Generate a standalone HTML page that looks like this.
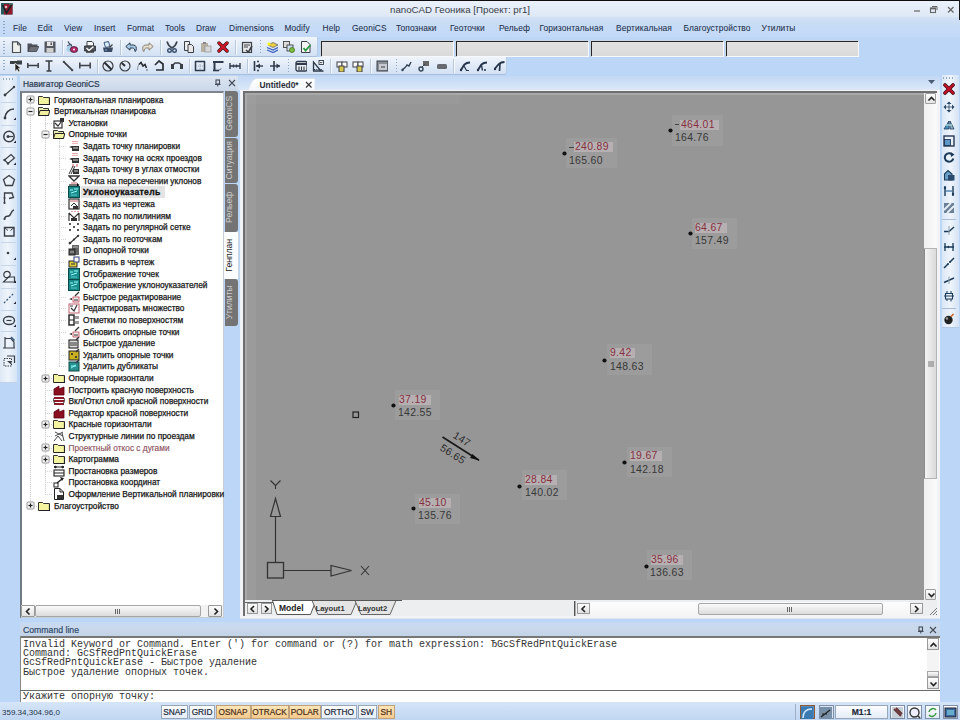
<!DOCTYPE html>
<html><head><meta charset="utf-8"><style>
*{margin:0;padding:0;box-sizing:border-box}
html,body{width:960px;height:720px;overflow:hidden;background:#bcd6f7;font-family:"Liberation Sans",sans-serif;position:relative}
.a{position:absolute}
.t{position:absolute;white-space:nowrap;line-height:1}
.mi{top:24px;font-size:8.4px;color:#1b2d48;-webkit-text-stroke:.05px #1b2d48;letter-spacing:.1px}
.r{font-size:8.3px;color:#161616;-webkit-text-stroke:.25px #161616}
.lbl{font-size:11.6px;letter-spacing:.35px;transform:scaleX(.9);transform-origin:0 0}
.red{color:#86303f}
.blk{color:#383838}
.ml{font-family:"Liberation Mono",monospace;font-size:10px;color:#333;left:23px}
.sb{position:absolute;top:705px;height:14px;font-size:8.3px;color:#1e2a3a;-webkit-text-stroke:.2px #1e2a3a;text-align:center;line-height:13px;border:1px solid #98a6ba;background:linear-gradient(#fcfdff,#e4ecf6);}
.sb.o{background:linear-gradient(#fde6b8,#f5c98c);border-color:#c0a078;color:#4a2e14;-webkit-text-stroke:.2px #4a2e14}
.tabv{position:absolute;left:225px;width:13px;background:#747474;border-radius:0 3px 3px 0}
.tabt{position:absolute;font-size:8.3px;color:#e8e8e8;white-space:nowrap;line-height:1;transform:rotate(-90deg);transform-origin:0 0}
</style></head><body>
<div class="a" style="left:0px;top:0px;width:960px;height:1px;background:#0e0e10"></div>
<div class="a" style="left:0px;top:1px;width:960px;height:16px;background:linear-gradient(#eaf1fa,#dee8f5)"></div>
<svg class="a" style="left:1.3px;top:3px" width="12" height="12" viewBox="0 0 12 12"><rect x="0" y="0" width="11.5" height="11.5" fill="#2a5a5e"/><rect x="3" y="1" width="8.5" height="10.5" fill="#8e1c2c"/><path d="M1.5 2L5.5 10L11 1" stroke="#1a2228" stroke-width="1.6" fill="none"/><circle cx="5" cy="4" r="1.3" fill="#e8b0b8"/><rect x="8" y="0" width="3.5" height="2" fill="#4a6a60"/></svg>
<div class="t" style="left:390px;top:4.5px;font-size:9.7px;color:#3a3f47">nanoCAD Геоника [Проект: pr1]</div>
<svg class="a" style="left:912px;top:5px" width="9" height="9" viewBox="0 0 9 9"><path d="M2 6H8" stroke="#666" stroke-width="1.2"/></svg>
<svg class="a" style="left:929px;top:5px" width="9" height="9" viewBox="0 0 9 9"><path d="M3 1.5H8V5" stroke="#666" stroke-width="1" fill="none"/><rect x="1.5" y="3" width="5" height="4.5" fill="none" stroke="#666" stroke-width="1.1"/><path d="M1.5 3.6H6.5" stroke="#666" stroke-width="1.5"/></svg>
<svg class="a" style="left:946px;top:5px" width="9" height="9" viewBox="0 0 9 9"><path d="M2 2L7.5 7.5M7.5 2L2 7.5" stroke="#666" stroke-width="1.2"/></svg>
<div class="a" style="left:0px;top:17px;width:960px;height:20px;background:linear-gradient(#d3e1f3 0,#c8dcf6 35%,#c2d9f7 100%)"></div>
<div class="a" style="left:3px;top:21px;width:2px;height:13px;background:repeating-linear-gradient(#8da6c4 0 1px,transparent 1px 3px)"></div>
<div class="t mi" style="left:13px">File</div>
<div class="t mi" style="left:37.5px">Edit</div>
<div class="t mi" style="left:64px">View</div>
<div class="t mi" style="left:94px">Insert</div>
<div class="t mi" style="left:127px">Format</div>
<div class="t mi" style="left:165px">Tools</div>
<div class="t mi" style="left:196px">Draw</div>
<div class="t mi" style="left:229px">Dimensions</div>
<div class="t mi" style="left:284.5px">Modify</div>
<div class="t mi" style="left:322.5px">Help</div>
<div class="t mi" style="left:352px">GeoniCS</div>
<div class="t mi" style="left:396px">Топознаки</div>
<div class="t mi" style="left:450px">Геоточки</div>
<div class="t mi" style="left:499px">Рельеф</div>
<div class="t mi" style="left:539.5px">Горизонтальная</div>
<div class="t mi" style="left:616px">Вертикальная</div>
<div class="t mi" style="left:683.5px">Благоустройство</div>
<div class="t mi" style="left:761.5px">Утилиты</div>
<div class="a" style="left:959px;top:0px;width:1px;height:20px;background:#1a1a1c"></div>
<div class="a" style="left:0px;top:37px;width:318px;height:20px;background:linear-gradient(#f0f5fc 0,#e2ebf7 45%,#d2e1f4 100%);border-bottom:1px solid #a9c0dc;border-right:1px solid #b8cde6;border-radius:0 0 3px 0"></div>
<div class="a" style="left:0px;top:57px;width:507px;height:18px;background:linear-gradient(#f0f5fc 0,#e2ebf7 45%,#d2e1f4 100%);border-bottom:1px solid #a9c0dc;border-right:1px solid #b8cde6;border-radius:0 0 3px 0"></div>
<div class="a" style="left:3px;top:41px;width:2px;height:13px;background:repeating-linear-gradient(#94aac6 0 1px,transparent 1px 3px)"></div>
<div class="a" style="left:3px;top:60px;width:2px;height:12px;background:repeating-linear-gradient(#94aac6 0 1px,transparent 1px 3px)"></div>
<svg class="a" style="left:10px;top:41px" width="12" height="12" viewBox="0 0 12 12"><path d="M2.5 .8H7.5L10.5 3.8V11.5H2.5Z" fill="#eef0ec" stroke="#4a4e54" stroke-width="1.2"/><path d="M7.5 .8V3.8H10.5" fill="none" stroke="#4a4e54" stroke-width="1"/></svg>
<svg class="a" style="left:27px;top:41px" width="12" height="12" viewBox="0 0 12 12"><path d="M.5 2.5H4.5L5.5 3.5H10.5V5.5H3.5L1.5 10.5H.5Z" fill="#50545a"/><path d="M3 5.5H11.8L9.5 10.5H1Z" fill="#6e7278" stroke="#3b3f46" stroke-width=".8"/></svg>
<svg class="a" style="left:44px;top:41px" width="12" height="12" viewBox="0 0 12 12"><rect x=".5" y=".5" width="11" height="11" fill="#555a60"/><rect x="3" y="1" width="6" height="4" fill="#e6e6e6"/><rect x="6.5" y="1.5" width="1.5" height="2.5" fill="#555"/><rect x="2.5" y="7" width="7" height="4.5" fill="#cfcfcf"/></svg>
<svg class="a" style="left:66px;top:41px" width="12" height="12" viewBox="0 0 12 12"><path d="M2 .5L4.5 4.5" stroke="#3a4a60" stroke-width="1.3"/><path d="M1 5L5 3L6 6" stroke="#3a4a60" stroke-width="1" fill="none"/><circle cx="3.5" cy="8" r="3" fill="#a8d0e8"/><ellipse cx="8" cy="8.5" rx="3.8" ry="3" fill="#b02868" stroke="#3a1a30" stroke-width=".7"/><circle cx="8" cy="8.5" r=".9" fill="#fff"/></svg>
<svg class="a" style="left:84px;top:41px" width="12" height="12" viewBox="0 0 12 12"><path d="M3 .5H8L9.5 2V5H3Z" fill="#fff" stroke="#3b3f46" stroke-width="1"/><path d="M.5 5H11.5V10H.5Z" fill="#50545a" stroke="#2a2e34" stroke-width=".8"/><path d="M2.5 7L5 9.5L9.5 5.5" stroke="#f4f4f4" stroke-width="1.4" fill="none"/><rect x="2" y="10" width="8" height="1.8" fill="#444"/></svg>
<svg class="a" style="left:102px;top:41px" width="12" height="12" viewBox="0 0 12 12"><path d="M2 1.5L6.5 .5L8 5.5L3.5 6.5Z" fill="#d8ecf8" stroke="#2a4a70" stroke-width=".9"/><path d="M1 6.5H11L10 11H2Z" fill="#3a4a62"/><path d="M7.5 6.5L10.5 3.5" stroke="#444" stroke-width="1.3"/><circle cx="4" cy="9" r="1" fill="#6a8ab0"/></svg>
<svg class="a" style="left:125px;top:41px" width="12" height="12" viewBox="0 0 12 12"><path d="M.8 5.5L5 1.8V4H8.5C11 4 11.8 6.5 11 9.8L10 10.5C9.8 8.2 9 7 7.5 7H5V9.2Z" fill="#a6cce8" stroke="#2c3a4a" stroke-width="1"/></svg>
<svg class="a" style="left:142px;top:41px" width="12" height="12" viewBox="0 0 12 12"><path d="M11.2 5.5L7 1.8V4H3.5C1 4 .2 6.5 1 9.8L2 10.5C2.2 8.2 3 7 4.5 7H7V9.2Z" fill="#e4dccc" stroke="#8a8478" stroke-width="1"/></svg>
<svg class="a" style="left:166px;top:41px" width="12" height="12" viewBox="0 0 12 12"><path d="M1 .5C2 4 4 6 6 7C8 6 10 4 11 .5" stroke="#3a4450" stroke-width="1.6" fill="none"/><circle cx="3.5" cy="9.5" r="1.8" fill="none" stroke="#3a5070" stroke-width="1.4"/><circle cx="8.5" cy="9.5" r="1.8" fill="none" stroke="#3a5070" stroke-width="1.4"/></svg>
<svg class="a" style="left:183px;top:41px" width="12" height="12" viewBox="0 0 12 12"><path d="M1.5 .5H6.5V9.5H1.5Z" fill="#eee" stroke="#3b3f46"/><path d="M5 3.5H8.5L10.5 5.5V11.5H5Z" fill="#e8e8e8" stroke="#3b3f46"/></svg>
<svg class="a" style="left:200px;top:41px" width="12" height="12" viewBox="0 0 12 12"><rect x="1" y="2" width="7" height="9" fill="#b8b0a0"/><rect x="3" y="1" width="3" height="2" fill="#888"/><rect x="5" y="5" width="6" height="6" fill="#d8d8d8" stroke="#999" stroke-width=".8"/></svg>
<svg class="a" style="left:217px;top:41px" width="12" height="12" viewBox="0 0 12 12"><path d="M2 2L10 10M10 2L2 10" stroke="#3a0a10" stroke-width="3.4" stroke-linecap="round"/><path d="M2 2L10 10M10 2L2 10" stroke="#d01828" stroke-width="2.3" stroke-linecap="round"/></svg>
<svg class="a" style="left:241px;top:41px" width="12" height="12" viewBox="0 0 12 12"><rect x="1.5" y="1.5" width="9" height="10" fill="#e8e8e8" stroke="#3b3f46" stroke-width="1.2"/><path d="M3 4H9M3 6H7" stroke="#3b3f46"/><path d="M5 9L7.5 11L11 5" stroke="#3b3f46" stroke-width="1.6" fill="none"/></svg>
<svg class="a" style="left:266px;top:41px" width="12" height="12" viewBox="0 0 12 12"><path d="M2 4L7 1.5L12 4L7 6.5Z" fill="#f0d040" stroke="#556" stroke-width=".7"/><path d="M1 6.5L7 9L12 6.5M1 9L7 11.5L12 9" stroke="#3a60c0" stroke-width="1.3" fill="none"/><circle cx="3" cy="3" r="1.5" fill="#ff0"/></svg>
<svg class="a" style="left:283px;top:41px" width="12" height="12" viewBox="0 0 12 12"><rect x=".5" y=".5" width="6" height="6" fill="#ddd" stroke="#444" stroke-width=".9"/><rect x="4" y="4" width="6" height="6" fill="#cde" stroke="#444" stroke-width=".9"/><circle cx="9" cy="9" r="2.5" fill="#7ac040" stroke="#4a7020" stroke-width=".8"/></svg>
<svg class="a" style="left:300px;top:41px" width="12" height="12" viewBox="0 0 12 12"><path d="M1.5 .5H7L10 3.5V11.5H1.5Z" fill="#f4f4f4" stroke="#3b3f46"/><path d="M3.5 7L5.5 9.5L10.5 4" stroke="#2a9a40" stroke-width="1.8" fill="none"/></svg>
<div class="a" style="left:62px;top:40px;width:2px;height:15px;border-left:1px solid #b9c9dc;border-right:1px solid #f6f9fd"></div>
<div class="a" style="left:120px;top:40px;width:2px;height:15px;border-left:1px solid #b9c9dc;border-right:1px solid #f6f9fd"></div>
<div class="a" style="left:160px;top:40px;width:2px;height:15px;border-left:1px solid #b9c9dc;border-right:1px solid #f6f9fd"></div>
<div class="a" style="left:235px;top:40px;width:2px;height:15px;border-left:1px solid #b9c9dc;border-right:1px solid #f6f9fd"></div>
<div class="a" style="left:260px;top:40px;width:1px;height:15px;background:repeating-linear-gradient(#8fa4be 0 1px,transparent 1px 3px)"></div>
<svg class="a" style="left:9.5px;top:60px" width="12" height="12" viewBox="0 0 12 12"><path d="M0 1H7V4H0Z" fill="#3b3f46"/><path d="M7 .5H12V4.5H7Z" fill="#3b3f46"/><path d="M5 3L5 11.5L7 9.5L8.5 12L10 11L8.5 8.5H11Z" fill="#222" stroke="#fff" stroke-width=".6"/></svg>
<svg class="a" style="left:27px;top:60px" width="12" height="12" viewBox="0 0 12 12"><path d="M.8 3V8M11.2 3V8M.8 5.5H11.2" stroke="#3b3f46" stroke-width="1.5"/></svg>
<svg class="a" style="left:43px;top:60px" width="12" height="12" viewBox="0 0 12 12"><path d="M2.5 1H9.5M3.5 11H8.5M6 1V11" stroke="#3b3f46" stroke-width="1.6"/></svg>
<svg class="a" style="left:61.5px;top:60px" width="12" height="12" viewBox="0 0 12 12"><path d="M1 2.5L2.5 1M9.5 11L11 9.5M1.8 1.8L10.2 10.2" stroke="#3b3f46" stroke-width="1.7"/></svg>
<svg class="a" style="left:78.5px;top:60px" width="12" height="12" viewBox="0 0 12 12"><path d="M.8 2.5V8.5M11.2 2.5V8.5M.8 5.5H11.2" stroke="#3b3f46" stroke-width="1.5"/></svg>
<svg class="a" style="left:102px;top:60px" width="12" height="12" viewBox="0 0 12 12"><circle cx="6" cy="6" r="5" fill="none" stroke="#3b3f46" stroke-width="1.2"/><path d="M2.5 2.5L9.5 9.5" stroke="#2a2e35" stroke-width="1.9"/></svg>
<svg class="a" style="left:119px;top:60px" width="12" height="12" viewBox="0 0 12 12"><circle cx="6" cy="6" r="5" fill="none" stroke="#3b3f46" stroke-width="1.2"/><path d="M6 6L2.8 3" stroke="#2a2e35" stroke-width="2"/></svg>
<svg class="a" style="left:136px;top:60px" width="12" height="12" viewBox="0 0 12 12"><path d="M1.5 10C1.5 6 3 3 6 2" fill="none" stroke="#8a9098" stroke-width="1"/><path d="M3 4.5L5 2.5L7 6L9 4.5L10.5 8" stroke="#2a2e35" stroke-width="1.6" fill="none"/><circle cx="11" cy="10" r=".8" fill="#555"/></svg>
<svg class="a" style="left:154px;top:60px" width="12" height="12" viewBox="0 0 12 12"><path d="M1 5L5 1L9 4V10H2" fill="none" stroke="#2a2e35" stroke-width="1.7"/></svg>
<svg class="a" style="left:171px;top:60px" width="12" height="12" viewBox="0 0 12 12"><path d="M1 6L4 3L8 3L11 5" fill="none" stroke="#3b3f46" stroke-width="1.5"/><path d="M0 4H3V9H0ZM9 4H12V9H9Z" fill="#3b3f46"/></svg>
<svg class="a" style="left:194px;top:60px" width="12" height="12" viewBox="0 0 12 12"><path d="M1 1.5H11M1 10.5H11M1.5 1V11M10.5 1V11" stroke="#2f3a4a" stroke-width="1.5"/><path d="M2 6H10M6 2V10" stroke="#8a96a6" stroke-width=".8" stroke-dasharray="1 1"/></svg>
<svg class="a" style="left:212px;top:60px" width="12" height="12" viewBox="0 0 12 12"><path d="M1 2H11.5" stroke="#2f3a4a" stroke-width="2"/><path d="M2.5 2V10" stroke="#2f3a4a" stroke-width="2"/><path d="M1 10.5H7" stroke="#2f3a4a" stroke-width="1.6"/><path d="M7 10.5L9 8.5" stroke="#2f3a4a" stroke-width="1"/></svg>
<svg class="a" style="left:228.5px;top:60px" width="12" height="12" viewBox="0 0 12 12"><path d="M1 3V9M11 3V9M1 6H11M4.5 4.5V7.5M7.5 4.5V7.5" stroke="#2f3a4a" stroke-width="1.4"/></svg>
<svg class="a" style="left:251.5px;top:60px" width="12" height="12" viewBox="0 0 12 12"><path d="M2.5 1V11" stroke="#2f3a4a" stroke-width="1.6"/><path d="M4 6H11" stroke="#2f3a4a" stroke-width="1.4"/><path d="M4 6L8 3.5V8.5Z" fill="#2f3a4a"/><circle cx="6" cy="1.5" r="1" fill="#2f3a4a"/><circle cx="6" cy="10.5" r="1" fill="#2f3a4a"/></svg>
<svg class="a" style="left:269px;top:60px" width="12" height="12" viewBox="0 0 12 12"><path d="M5 1V11" stroke="#2f3a4a" stroke-width="1.6"/><path d="M1 6H11" stroke="#2f3a4a" stroke-width="1.4"/><path d="M11 6L7.5 3.5V8.5Z" fill="#2f3a4a"/></svg>
<svg class="a" style="left:295px;top:60px" width="12" height="12" viewBox="0 0 12 12"><rect x="1" y="1.5" width="11" height="9.5" rx="1.5" fill="#e8edf3" stroke="#2f3a4a" stroke-width="1.3"/><path d="M1 4H12" stroke="#2f3a4a" stroke-width="2"/><path d="M4 6.5V10M6.5 6.5V10M9 6.5V10" stroke="#2f3a4a" stroke-width="1.1"/></svg>
<svg class="a" style="left:312px;top:60px" width="12" height="12" viewBox="0 0 12 12"><path d="M1 11H11.5M1.5 11V2L9 11" fill="none" stroke="#2f3a4a" stroke-width="1.3"/><path d="M2 9.5H10" stroke="#2f3a4a" stroke-dasharray="1 .8"/><rect x="7" y=".5" width="4.5" height="4" fill="#fff" stroke="#2f3a4a" stroke-width=".9"/><path d="M8 1.8L9.2 3.2L10.5 1.8" stroke="#2f3a4a" fill="none"/></svg>
<svg class="a" style="left:336px;top:60px" width="12" height="12" viewBox="0 0 12 12"><rect x="1" y="2" width="5" height="5" fill="#fff" stroke="#3b3f46"/><rect x="6" y="2" width="5" height="5" fill="#fff" stroke="#3b3f46"/><rect x="3" y="6" width="5" height="6" fill="#d8c850" stroke="#3b3f46"/></svg>
<svg class="a" style="left:352px;top:60px" width="12" height="12" viewBox="0 0 12 12"><rect x="1" y="2" width="5" height="5" fill="#fff" stroke="#3b3f46"/><rect x="6" y="2" width="5" height="5" fill="#fff" stroke="#3b3f46"/><rect x="5" y="6" width="5" height="6" fill="#d8c850" stroke="#3b3f46"/></svg>
<svg class="a" style="left:376px;top:60px" width="12" height="12" viewBox="0 0 12 12"><rect x="1" y="1" width="11" height="10" fill="#8a9098" stroke="#3b3f46"/><rect x="3" y="4" width="8" height="6" fill="#c8ccd2"/><path d="M5 7H9" stroke="#3b3f46"/></svg>
<svg class="a" style="left:401px;top:60px" width="12" height="12" viewBox="0 0 12 12"><path d="M1 10C3 9 5 7 6 5L8 6L10 2" stroke="#345" stroke-width="1.4" fill="none"/><circle cx="1.5" cy="10" r="1.2" fill="#345"/></svg>
<svg class="a" style="left:418px;top:60px" width="12" height="12" viewBox="0 0 12 12"><circle cx="3" cy="9" r="2" fill="none" stroke="#345" stroke-width="1.4"/><rect x="5" y="1" width="6" height="5" fill="#666"/><path d="M4 7L7 4" stroke="#345"/></svg>
<svg class="a" style="left:436px;top:60px" width="12" height="12" viewBox="0 0 12 12"><rect x="1" y="4" width="10" height="5" rx="1.5" fill="#666a70"/></svg>
<svg class="a" style="left:459px;top:60px" width="12" height="12" viewBox="0 0 12 12"><path d="M1.5 10.5C3 9 4 6 5.5 4.5C7 3 9 2.5 11 2.5" stroke="#26344a" stroke-width="1.8" fill="none"/><path d="M5 6L7.5 10.5H10" stroke="#26344a" stroke-width="1.2" fill="none"/><circle cx="2" cy="10" r="1.2" fill="#26344a"/></svg>
<svg class="a" style="left:476px;top:60px" width="12" height="12" viewBox="0 0 12 12"><path d="M1.5 10.5C3 9 4 6 5.5 4.5C7 3 9 2.5 11 2.5" stroke="#26344a" stroke-width="1.8" fill="none"/><path d="M5.5 5.5L6.5 10.5" stroke="#26344a" stroke-width="1.3" fill="none"/><circle cx="9" cy="10" r="1" fill="#26344a"/><circle cx="2" cy="10" r="1.2" fill="#26344a"/></svg>
<svg class="a" style="left:493px;top:60px" width="12" height="12" viewBox="0 0 12 12"><path d="M1.5 9C3 8 4 5.5 6 4C7.5 2.5 9.5 2 11.5 2" stroke="#26344a" stroke-width="1.8" fill="none"/><path d="M7 3.5L6.5 11" stroke="#26344a" stroke-width="1.6" fill="none"/><circle cx="2" cy="9" r="1.2" fill="#26344a"/></svg>
<div class="a" style="left:97px;top:59px;width:2px;height:14px;border-left:1px solid #b9c9dc;border-right:1px solid #f6f9fd"></div>
<div class="a" style="left:189px;top:59px;width:2px;height:14px;border-left:1px solid #b9c9dc;border-right:1px solid #f6f9fd"></div>
<div class="a" style="left:246.5px;top:59px;width:2px;height:14px;border-left:1px solid #b9c9dc;border-right:1px solid #f6f9fd"></div>
<div class="a" style="left:288px;top:59px;width:1px;height:14px;background:repeating-linear-gradient(#8fa4be 0 1px,transparent 1px 3px)"></div>
<div class="a" style="left:329.5px;top:59px;width:2px;height:14px;border-left:1px solid #b9c9dc;border-right:1px solid #f6f9fd"></div>
<div class="a" style="left:370px;top:59px;width:2px;height:14px;border-left:1px solid #b9c9dc;border-right:1px solid #f6f9fd"></div>
<div class="a" style="left:396px;top:59px;width:1px;height:14px;background:repeating-linear-gradient(#8fa4be 0 1px,transparent 1px 3px)"></div>
<div class="a" style="left:453px;top:59px;width:2px;height:14px;border-left:1px solid #b9c9dc;border-right:1px solid #f6f9fd"></div>
<div class="a" style="left:321px;top:41px;width:132px;height:15px;background:linear-gradient(#e2e2e2,#dadada);border-top:1.5px solid #262626;border-left:1.5px solid #262626;box-shadow:1px 1px 0 #f6f8fb, 0 0 0 1px #c9d6e6"></div>
<div class="a" style="left:456px;top:41px;width:132px;height:15px;background:linear-gradient(#e2e2e2,#dadada);border-top:1.5px solid #262626;border-left:1.5px solid #262626;box-shadow:1px 1px 0 #f6f8fb, 0 0 0 1px #c9d6e6"></div>
<div class="a" style="left:591px;top:41px;width:132px;height:15px;background:linear-gradient(#e2e2e2,#dadada);border-top:1.5px solid #262626;border-left:1.5px solid #262626;box-shadow:1px 1px 0 #f6f8fb, 0 0 0 1px #c9d6e6"></div>
<div class="a" style="left:726px;top:41px;width:132px;height:15px;background:linear-gradient(#e2e2e2,#dadada);border-top:1.5px solid #262626;border-left:1.5px solid #262626;box-shadow:1px 1px 0 #f6f8fb, 0 0 0 1px #c9d6e6"></div>
<div class="a" style="left:0px;top:76px;width:17px;height:307px;background:linear-gradient(90deg,#dde8f6,#eef4fb 45%,#d6e4f5);border-bottom:1px solid #c0d2e8"></div>
<div class="a" style="left:3px;top:78px;width:11px;height:2px;background:repeating-linear-gradient(90deg,#94aac6 0 1px,transparent 1px 3px)"></div>
<div class="a" style="left:1px;top:102px;width:15px;height:1px;background:#c6d5e8"></div>
<div class="a" style="left:1px;top:125px;width:15px;height:1px;background:#c6d5e8"></div>
<div class="a" style="left:1px;top:147px;width:15px;height:1px;background:#c6d5e8"></div>
<div class="a" style="left:1px;top:169px;width:15px;height:1px;background:#c6d5e8"></div>
<div class="a" style="left:1px;top:242px;width:15px;height:1px;background:#c6d5e8"></div>
<div class="a" style="left:1px;top:265px;width:15px;height:1px;background:#c6d5e8"></div>
<div class="a" style="left:1px;top:288px;width:15px;height:1px;background:#c6d5e8"></div>
<div class="a" style="left:1px;top:310px;width:15px;height:1px;background:#c6d5e8"></div>
<div class="a" style="left:1px;top:331px;width:15px;height:1px;background:#c6d5e8"></div>
<svg class="a" style="left:2px;top:84.5px" width="15" height="14" viewBox="0 0 15 14"><path d="M3 10L12 2" stroke="#3b3f46" stroke-width="1.2"/><circle cx="3" cy="10" r="1.4" fill="#3b3f46"/><circle cx="12" cy="2" r="1.2" fill="#3b3f46"/></svg>
<svg class="a" style="left:2px;top:106.5px" width="15" height="14" viewBox="0 0 15 14"><path d="M3 11C3 6 7 2 12 2" fill="none" stroke="#3b3f46" stroke-width="1.6"/><circle cx="3" cy="11" r="1.4" fill="#3b3f46"/><path d="M11.5 13L14 10.5V13Z" fill="#223"/></svg>
<svg class="a" style="left:2px;top:129.5px" width="15" height="14" viewBox="0 0 15 14"><circle cx="7" cy="6.5" r="5.2" fill="none" stroke="#3b3f46" stroke-width="1.5"/><path d="M6 6.5L11 6.5" stroke="#3b3f46" stroke-width="1.2"/><circle cx="6" cy="6.5" r="1.5" fill="#3b3f46"/><path d="M11.5 13L14 10.5V13Z" fill="#223"/></svg>
<svg class="a" style="left:2px;top:151.5px" width="15" height="14" viewBox="0 0 15 14"><path d="M2.5 8L9 2.5L12.5 6L6 11.5Z" fill="none" stroke="#3b3f46" stroke-width="1.2"/><circle cx="2.5" cy="8" r="1.2" fill="#3b3f46"/><circle cx="6" cy="11.5" r="1.2" fill="#3b3f46"/><path d="M11.5 13L14 10.5V13Z" fill="#223"/></svg>
<svg class="a" style="left:2px;top:173.5px" width="15" height="14" viewBox="0 0 15 14"><path d="M7 1.5L12.5 5.5L10.5 11.5H3.5L1.5 5.5Z" fill="none" stroke="#3b3f46" stroke-width="1.3"/></svg>
<svg class="a" style="left:2px;top:190.5px" width="15" height="14" viewBox="0 0 15 14"><path d="M2.5 12V2H10L11.5 6.5L7 7.5" fill="none" stroke="#3b3f46" stroke-width="1.3"/><circle cx="2.5" cy="12" r="1.1" fill="#3b3f46"/><circle cx="2.5" cy="7" r="1" fill="#3b3f46"/></svg>
<svg class="a" style="left:2px;top:207.5px" width="15" height="14" viewBox="0 0 15 14"><path d="M2.5 11C3.5 6 6 10 8 7S10 2 12 2" fill="none" stroke="#3b3f46" stroke-width="1.4"/><circle cx="2.5" cy="11" r="1.1" fill="#3b3f46"/></svg>
<svg class="a" style="left:2px;top:224.5px" width="15" height="14" viewBox="0 0 15 14"><path d="M2.5 2.5V11H12V2.5Z" fill="none" stroke="#3b3f46" stroke-width="1.4"/><path d="M2.5 2.5L6 5.5M12 2.5L8.5 5.5" stroke="#3b3f46"/></svg>
<svg class="a" style="left:2px;top:246.5px" width="15" height="14" viewBox="0 0 15 14"><circle cx="6" cy="6" r="1.3" fill="#3b3f46"/><path d="M11.5 13L14 10.5V13Z" fill="#223"/></svg>
<svg class="a" style="left:2px;top:269.5px" width="15" height="14" viewBox="0 0 15 14"><circle cx="5" cy="4.5" r="3.2" fill="none" stroke="#3b3f46" stroke-width="1.2"/><path d="M1.5 12L6.5 7H12.5V12Z" fill="none" stroke="#3b3f46" stroke-width="1.2"/><path d="M11.5 13L14 10.5V13Z" fill="#223"/></svg>
<svg class="a" style="left:2px;top:290.5px" width="15" height="14" viewBox="0 0 15 14"><path d="M2 12L12 2" stroke="#3a5a80" stroke-width="1.3" stroke-dasharray="2 1.6"/><path d="M11.5 13L14 10.5V13Z" fill="#223"/></svg>
<svg class="a" style="left:2px;top:313.5px" width="15" height="14" viewBox="0 0 15 14"><ellipse cx="7" cy="6.5" rx="5.5" ry="4" fill="none" stroke="#3b3f46" stroke-width="1.4"/><path d="M4.5 6.5H9.5" stroke="#3b3f46" stroke-width="1.2"/><path d="M11.5 13L14 10.5V13Z" fill="#223"/></svg>
<svg class="a" style="left:2px;top:335.5px" width="15" height="14" viewBox="0 0 15 14"><path d="M1 12H13M3 1V12M3 2.5H9L12 6V12" fill="none" stroke="#3b3f46" stroke-width="1.2"/><path d="M9 1L12.5 4.5" stroke="#3a5a80" stroke-width="1.6"/></svg>
<svg class="a" style="left:2px;top:353.5px" width="15" height="14" viewBox="0 0 15 14"><rect x="2" y="4.5" width="7.5" height="7.5" fill="none" stroke="#3b3f46" stroke-dasharray="1.5 1"/><path d="M5 2H12.5V9" fill="none" stroke="#3b3f46" stroke-width="1.2"/><path d="M5 7L9 7L9 10.5Z" fill="#3b3f46"/></svg>
<div class="a" style="left:941.5px;top:75px;width:17.5px;height:253px;background:linear-gradient(90deg,#dbe7f6,#eef4fb 50%,#d4e2f4);border-bottom:1px solid #b6c9e2"></div>
<div class="a" style="left:943px;top:77px;width:12px;height:2px;background:repeating-linear-gradient(90deg,#94aac6 0 1px,transparent 1px 3px)"></div>
<div class="a" style="left:942px;top:219px;width:14px;height:1px;background:#a9bcd4"></div>
<div class="a" style="left:942px;top:308px;width:14px;height:1px;background:#a9bcd4"></div>
<svg class="a" style="left:943px;top:83px" width="12" height="12" viewBox="0 0 12 12"><path d="M2 2L10 10M10 2L2 10" stroke="#3a0a10" stroke-width="3.6" stroke-linecap="round"/><path d="M2 2L10 10M10 2L2 10" stroke="#c01028" stroke-width="2.4" stroke-linecap="round"/></svg>
<svg class="a" style="left:943px;top:101px" width="12" height="12" viewBox="0 0 12 12"><path d="M6 .5L8.5 3H3.5ZM6 11.5L8.5 9H3.5ZM.5 6L3 3.5V8.5ZM11.5 6L9 3.5V8.5Z" fill="#2a4a68"/><path d="M6 3V9M3 6H9" stroke="#2a4a68" stroke-width=".8"/></svg>
<svg class="a" style="left:943px;top:118px" width="12" height="12" viewBox="0 0 12 12"><path d="M1 11L6 3V11Z" fill="#4a90c0" stroke="#1a3a58" stroke-width=".8"/><path d="M11 11L7 3V11Z" fill="#8ab0c8" stroke="#1a3a58" stroke-width=".8"/><path d="M3 7L9 7" stroke="#cfe" stroke-width="1"/></svg>
<svg class="a" style="left:943px;top:135px" width="12" height="12" viewBox="0 0 12 12"><rect x="1" y="1" width="10" height="10" fill="#e8f0f8" stroke="#1a2a48" stroke-width="1.3"/><rect x="1.5" y="4.5" width="6" height="6" fill="#5a98c8" stroke="#1a2a48" stroke-width=".8"/></svg>
<svg class="a" style="left:943px;top:151px" width="12" height="12" viewBox="0 0 12 12"><path d="M9.8 4.2A4.3 4.3 0 1 0 10.3 7.5" fill="none" stroke="#1a3a58" stroke-width="2"/><path d="M7.5 1L11.5 3.5L8 6Z" fill="#1a3a58"/></svg>
<svg class="a" style="left:943px;top:169px" width="12" height="12" viewBox="0 0 12 12"><path d="M1.5 11V5L5 1.5L9 5V11Z" fill="#6aa0c8" stroke="#1a3a58" stroke-width="1.1"/><rect x="5" y="6" width="6.5" height="5.5" fill="#2a4a70"/></svg>
<svg class="a" style="left:943px;top:185px" width="12" height="12" viewBox="0 0 12 12"><path d="M2 1V11M10 1V11" stroke="#1a3a58" stroke-width="1.4"/><path d="M3 6H9" stroke="#4a80b0" stroke-width="1.4"/><circle cx="2" cy="3" r="1.2" fill="#1a3a58"/><circle cx="10" cy="9" r="1.2" fill="#1a3a58"/></svg>
<svg class="a" style="left:943px;top:202px" width="12" height="12" viewBox="0 0 12 12"><rect x="1" y="1" width="10" height="10" fill="#6a7f98"/><path d="M1 8L8 1M4 11L11 4" stroke="#e8eef4" stroke-width="1.8"/></svg>
<svg class="a" style="left:943px;top:224px" width="12" height="12" viewBox="0 0 12 12"><path d="M1 7.5H6L11 3" stroke="#1a3a58" stroke-width="1.4" fill="none"/><path d="M6 2V11" stroke="#8aa0b0" stroke-width="1"/></svg>
<svg class="a" style="left:943px;top:241px" width="12" height="12" viewBox="0 0 12 12"><path d="M1 6H11M2 2V10M10 2V10" stroke="#1a3a58" stroke-width="1.3"/><path d="M4 6L6 4.5V7.5Z" fill="#1a3a58"/></svg>
<svg class="a" style="left:943px;top:257px" width="12" height="12" viewBox="0 0 12 12"><path d="M1 11L5 7M7 5L11 1" stroke="#1a3a58" stroke-width="1.5"/><circle cx="5" cy="7" r="1" fill="#1a3a58"/><circle cx="7" cy="5" r="1" fill="#1a3a58"/></svg>
<svg class="a" style="left:943px;top:274px" width="12" height="12" viewBox="0 0 12 12"><path d="M1 8.5L11 4" stroke="#1a3a58" stroke-width="1.4"/><path d="M6 2.5V10" stroke="#8aa0b0" stroke-width="1"/></svg>
<svg class="a" style="left:943px;top:290px" width="12" height="12" viewBox="0 0 12 12"><path d="M2.5 3.5H9.5V9H2.5Z" fill="none" stroke="#1a3a58" stroke-width="1.1"/><path d="M1 6H11" stroke="#1a3a58"/><path d="M4 1V3.5M8 9V11.5M4 9V11M8 1V3.5" stroke="#1a3a58"/></svg>
<svg class="a" style="left:943px;top:313px" width="12" height="12" viewBox="0 0 12 12"><circle cx="5.5" cy="7" r="4.2" fill="#222"/><circle cx="4" cy="5.5" r="1.2" fill="#999"/><path d="M8 3.5L10.5 1" stroke="#d06020" stroke-width="1.6"/></svg>
<div class="a" style="left:20px;top:76px;width:218px;height:15px;background:linear-gradient(#dde6f1,#cad8e9)"></div>
<div class="t" style="left:23px;top:79.5px;font-size:8.4px;color:#283850;-webkit-text-stroke:.2px #283850">Навигатор GeoniCS</div>
<svg class="a" style="left:214px;top:79px" width="8" height="8" viewBox="0 0 8 8"><rect x="2" y="1" width="3.5" height="4" fill="none" stroke="#444b58" stroke-width="1.1"/><path d="M1 5.5H6.5M3.75 5.5V7.5" stroke="#444b58" stroke-width="1"/></svg>
<svg class="a" style="left:227.5px;top:79px" width="8" height="8" viewBox="0 0 8 8"><path d="M1 1L7 7M7 1L1 7" stroke="#444b58" stroke-width="1.1"/></svg>
<div class="a" style="left:20px;top:91px;width:204px;height:527px;background:#fff;border-left:2px solid #707a82;border-top:2px solid #7e858e;border-right:1px solid #c8ced6;border-bottom:1px solid #c8ced6"></div>
<div class="tabv" style="top:90.5px;height:46.5px"></div>
<div class="tabv" style="top:138.0px;height:44.5px"></div>
<div class="tabv" style="top:183.5px;height:48px"></div>
<div class="a" style="left:224px;top:232px;width:14.5px;height:46.5px;background:#fbfcfe;border-right:1px solid #d0d6de"></div>
<div class="tabv" style="top:279.0px;height:46.5px"></div>
<div class="a" style="left:222.5px;top:90px;width:14px;height:47.5px;display:flex;align-items:center;justify-content:center"><div style="transform:rotate(-90deg);font-size:8.6px;white-space:nowrap;line-height:1;color:#cfcfcf">GeoniCS</div></div>
<div class="a" style="left:222.5px;top:137.5px;width:14px;height:45.5px;display:flex;align-items:center;justify-content:center"><div style="transform:rotate(-90deg);font-size:8.6px;white-space:nowrap;line-height:1;color:#cfcfcf">Ситуация</div></div>
<div class="a" style="left:222.5px;top:183px;width:14px;height:49px;display:flex;align-items:center;justify-content:center"><div style="transform:rotate(-90deg);font-size:8.6px;white-space:nowrap;line-height:1;color:#cfcfcf">Рельеф</div></div>
<div class="a" style="left:222.5px;top:232px;width:14px;height:46.5px;display:flex;align-items:center;justify-content:center"><div style="transform:rotate(-90deg);font-size:8.6px;white-space:nowrap;line-height:1;color:#1a1a1a">Генплан</div></div>
<div class="a" style="left:222.5px;top:278.5px;width:14px;height:47.5px;display:flex;align-items:center;justify-content:center"><div style="transform:rotate(-90deg);font-size:8.6px;white-space:nowrap;line-height:1;color:#cfcfcf">Утилиты</div></div>
<div class="a" style="left:30px;top:99.6px;width:1px;height:406.0px;background:repeating-linear-gradient(#d0d0d0 0 1px,#f0f0f0 1px 2px)"></div>
<div class="a" style="left:44.5px;top:116.19999999999999px;width:1px;height:377.8px;background:repeating-linear-gradient(#d0d0d0 0 1px,#f0f0f0 1px 2px)"></div>
<div class="a" style="left:59px;top:139.39999999999998px;width:1px;height:227.0px;background:repeating-linear-gradient(#d0d0d0 0 1px,#f0f0f0 1px 2px)"></div>
<div class="a" style="left:30px;top:100px;width:8px;height:1px;background:repeating-linear-gradient(90deg,#d4d4d4 0 1px,transparent 1px 2px)"></div>
<div class="a" style="left:30px;top:111px;width:8px;height:1px;background:repeating-linear-gradient(90deg,#d4d4d4 0 1px,transparent 1px 2px)"></div>
<div class="a" style="left:44.5px;top:123px;width:8.0px;height:1px;background:repeating-linear-gradient(90deg,#d4d4d4 0 1px,transparent 1px 2px)"></div>
<div class="a" style="left:44.5px;top:134px;width:8.0px;height:1px;background:repeating-linear-gradient(90deg,#d4d4d4 0 1px,transparent 1px 2px)"></div>
<div class="a" style="left:59px;top:146px;width:8px;height:1px;background:repeating-linear-gradient(90deg,#d4d4d4 0 1px,transparent 1px 2px)"></div>
<div class="a" style="left:59px;top:158px;width:8px;height:1px;background:repeating-linear-gradient(90deg,#d4d4d4 0 1px,transparent 1px 2px)"></div>
<div class="a" style="left:59px;top:169px;width:8px;height:1px;background:repeating-linear-gradient(90deg,#d4d4d4 0 1px,transparent 1px 2px)"></div>
<div class="a" style="left:59px;top:181px;width:8px;height:1px;background:repeating-linear-gradient(90deg,#d4d4d4 0 1px,transparent 1px 2px)"></div>
<div class="a" style="left:59px;top:192px;width:8px;height:1px;background:repeating-linear-gradient(90deg,#d4d4d4 0 1px,transparent 1px 2px)"></div>
<div class="a" style="left:59px;top:204px;width:8px;height:1px;background:repeating-linear-gradient(90deg,#d4d4d4 0 1px,transparent 1px 2px)"></div>
<div class="a" style="left:59px;top:216px;width:8px;height:1px;background:repeating-linear-gradient(90deg,#d4d4d4 0 1px,transparent 1px 2px)"></div>
<div class="a" style="left:59px;top:227px;width:8px;height:1px;background:repeating-linear-gradient(90deg,#d4d4d4 0 1px,transparent 1px 2px)"></div>
<div class="a" style="left:59px;top:239px;width:8px;height:1px;background:repeating-linear-gradient(90deg,#d4d4d4 0 1px,transparent 1px 2px)"></div>
<div class="a" style="left:59px;top:250px;width:8px;height:1px;background:repeating-linear-gradient(90deg,#d4d4d4 0 1px,transparent 1px 2px)"></div>
<div class="a" style="left:59px;top:262px;width:8px;height:1px;background:repeating-linear-gradient(90deg,#d4d4d4 0 1px,transparent 1px 2px)"></div>
<div class="a" style="left:59px;top:274px;width:8px;height:1px;background:repeating-linear-gradient(90deg,#d4d4d4 0 1px,transparent 1px 2px)"></div>
<div class="a" style="left:59px;top:285px;width:8px;height:1px;background:repeating-linear-gradient(90deg,#d4d4d4 0 1px,transparent 1px 2px)"></div>
<div class="a" style="left:59px;top:297px;width:8px;height:1px;background:repeating-linear-gradient(90deg,#d4d4d4 0 1px,transparent 1px 2px)"></div>
<div class="a" style="left:59px;top:308px;width:8px;height:1px;background:repeating-linear-gradient(90deg,#d4d4d4 0 1px,transparent 1px 2px)"></div>
<div class="a" style="left:59px;top:320px;width:8px;height:1px;background:repeating-linear-gradient(90deg,#d4d4d4 0 1px,transparent 1px 2px)"></div>
<div class="a" style="left:59px;top:332px;width:8px;height:1px;background:repeating-linear-gradient(90deg,#d4d4d4 0 1px,transparent 1px 2px)"></div>
<div class="a" style="left:59px;top:343px;width:8px;height:1px;background:repeating-linear-gradient(90deg,#d4d4d4 0 1px,transparent 1px 2px)"></div>
<div class="a" style="left:59px;top:355px;width:8px;height:1px;background:repeating-linear-gradient(90deg,#d4d4d4 0 1px,transparent 1px 2px)"></div>
<div class="a" style="left:59px;top:366px;width:8px;height:1px;background:repeating-linear-gradient(90deg,#d4d4d4 0 1px,transparent 1px 2px)"></div>
<div class="a" style="left:44.5px;top:378px;width:8.0px;height:1px;background:repeating-linear-gradient(90deg,#d4d4d4 0 1px,transparent 1px 2px)"></div>
<div class="a" style="left:44.5px;top:390px;width:8.0px;height:1px;background:repeating-linear-gradient(90deg,#d4d4d4 0 1px,transparent 1px 2px)"></div>
<div class="a" style="left:44.5px;top:401px;width:8.0px;height:1px;background:repeating-linear-gradient(90deg,#d4d4d4 0 1px,transparent 1px 2px)"></div>
<div class="a" style="left:44.5px;top:413px;width:8.0px;height:1px;background:repeating-linear-gradient(90deg,#d4d4d4 0 1px,transparent 1px 2px)"></div>
<div class="a" style="left:44.5px;top:424px;width:8.0px;height:1px;background:repeating-linear-gradient(90deg,#d4d4d4 0 1px,transparent 1px 2px)"></div>
<div class="a" style="left:44.5px;top:436px;width:8.0px;height:1px;background:repeating-linear-gradient(90deg,#d4d4d4 0 1px,transparent 1px 2px)"></div>
<div class="a" style="left:44.5px;top:448px;width:8.0px;height:1px;background:repeating-linear-gradient(90deg,#d4d4d4 0 1px,transparent 1px 2px)"></div>
<div class="a" style="left:44.5px;top:459px;width:8.0px;height:1px;background:repeating-linear-gradient(90deg,#d4d4d4 0 1px,transparent 1px 2px)"></div>
<div class="a" style="left:44.5px;top:471px;width:8.0px;height:1px;background:repeating-linear-gradient(90deg,#d4d4d4 0 1px,transparent 1px 2px)"></div>
<div class="a" style="left:44.5px;top:482px;width:8.0px;height:1px;background:repeating-linear-gradient(90deg,#d4d4d4 0 1px,transparent 1px 2px)"></div>
<div class="a" style="left:44.5px;top:494px;width:8.0px;height:1px;background:repeating-linear-gradient(90deg,#d4d4d4 0 1px,transparent 1px 2px)"></div>
<div class="a" style="left:30px;top:506px;width:8px;height:1px;background:repeating-linear-gradient(90deg,#d4d4d4 0 1px,transparent 1px 2px)"></div>
<div class="a" style="left:81px;top:186.39999999999998px;width:84px;height:12.0px;background:#e4e4e4"></div>
<svg class="a" style="left:26px;top:95px" width="9" height="9" viewBox="0 0 9 9"><rect x="1" y="1" width="7" height="7" rx="1" fill="#f4f4f4" stroke="#9a9a9a" stroke-width="1"/><path d="M2.5 4.5H6.5" stroke="#222" stroke-width="1.2"/><path d="M4.5 2.5V6.5" stroke="#222" stroke-width="1.2"/></svg>
<svg class="a" style="left:38px;top:94px" width="12" height="12" viewBox="0 0 12 12"><path d="M.5 2.5H4.5L5.5 3.5H11.5V10.5H.5Z" fill="#f4f4a0" stroke="#333" stroke-width="1"/><path d="M1 10.5H11.5V4" stroke="#222" stroke-width="1.2" fill="none"/></svg>
<div class="t r" style="left:54px;top:95.5px;">Горизонтальная планировка</div>
<svg class="a" style="left:26px;top:107px" width="9" height="9" viewBox="0 0 9 9"><rect x="1" y="1" width="7" height="7" rx="1" fill="#f4f4f4" stroke="#9a9a9a" stroke-width="1"/><path d="M2.5 4.5H6.5" stroke="#222" stroke-width="1.2"/></svg>
<svg class="a" style="left:38px;top:105px" width="12" height="12" viewBox="0 0 12 12"><path d="M.5 2.5H4.5L5.5 3.5H10.5V10.5H.5Z" fill="#e8e8b0" stroke="#333"/><path d="M2 5.5H11.8L10.5 10.5H.5Z" fill="#f0f0a0" stroke="#222" stroke-width="1"/></svg>
<div class="t r" style="left:54px;top:107.1px;">Вертикальная планировка</div>
<svg class="a" style="left:53px;top:117px" width="12" height="12" viewBox="0 0 12 12"><rect x="1" y="4" width="8" height="7" fill="#fff" stroke="#333" stroke-width="1.2"/><path d="M2 6L5 9L8 5" stroke="#333" stroke-width="1.2" fill="none"/><rect x="7" y="1" width="4" height="4" fill="#333"/></svg>
<div class="t r" style="left:68.5px;top:118.7px;">Установки</div>
<svg class="a" style="left:40.5px;top:130px" width="9" height="9" viewBox="0 0 9 9"><rect x="1" y="1" width="7" height="7" rx="1" fill="#f4f4f4" stroke="#9a9a9a" stroke-width="1"/><path d="M2.5 4.5H6.5" stroke="#222" stroke-width="1.2"/></svg>
<svg class="a" style="left:53px;top:128px" width="12" height="12" viewBox="0 0 12 12"><path d="M.5 2.5H4.5L5.5 3.5H10.5V10.5H.5Z" fill="#e8e8b0" stroke="#333"/><path d="M2 5.5H11.8L10.5 10.5H.5Z" fill="#f0f0a0" stroke="#222" stroke-width="1"/></svg>
<div class="t r" style="left:68.5px;top:130.3px;">Опорные точки</div>
<svg class="a" style="left:67.5px;top:140px" width="12" height="12" viewBox="0 0 12 12"><path d="M5 1V4M7 1V4M9 1V4" stroke="#d04050" stroke-width=".9" stroke-dasharray="1 .8"/><path d="M1 7L4 6V8Z" fill="#222"/><rect x="4" y="6" width="7" height="5" fill="#333"/><path d="M5 8H10" stroke="#fff" stroke-width=".8"/></svg>
<div class="t r" style="left:83px;top:141.9px;">Задать точку планировки</div>
<svg class="a" style="left:67.5px;top:152px" width="12" height="12" viewBox="0 0 12 12"><path d="M5 1V4M7 1V4M9 1V4" stroke="#d04050" stroke-width=".9" stroke-dasharray="1 .8"/><path d="M1 7L4 6V8Z" fill="#222"/><rect x="4" y="6" width="7" height="5" fill="#333"/><path d="M5 8H10" stroke="#fff" stroke-width=".8"/></svg>
<div class="t r" style="left:83px;top:153.5px;">Задать точку на осях проездов</div>
<svg class="a" style="left:67.5px;top:163px" width="12" height="12" viewBox="0 0 12 12"><path d="M5 1V4M9 1V4" stroke="#d04050" stroke-width=".9"/><path d="M1 11L5 3M3 11L7 3" stroke="#333" stroke-width="1"/><rect x="5" y="6" width="6" height="5" fill="#333"/><path d="M6 8H10" stroke="#fff" stroke-width=".8"/></svg>
<div class="t r" style="left:83px;top:165.1px;">Задать точку в углах отмостки</div>
<svg class="a" style="left:67.5px;top:175px" width="12" height="12" viewBox="0 0 12 12"><path d="M1 1H11L6 6Z" fill="none" stroke="#333" stroke-width="1.3"/><path d="M1 10H10" stroke="#333" stroke-width="1.3"/><path d="M9 8L11.5 10L9 12Z" fill="#111"/><path d="M4 7V9M6 7V9M8 7V9" stroke="#c04050" stroke-width=".8"/></svg>
<div class="t r" style="left:83px;top:176.7px;">Точка на пересечении уклонов</div>
<svg class="a" style="left:67.5px;top:186px" width="12" height="12" viewBox="0 0 12 12"><rect x=".5" y=".5" width="11" height="11" fill="#1a8a8a" stroke="#0a4a4a"/><path d="M2 4H5M6 3H10M3 7L9 5" stroke="#9ff" stroke-width="1"/><path d="M3 9H9" stroke="#5cc" stroke-width="1"/></svg>
<div class="t r" style="left:83px;top:188.3px;font-weight:bold;font-size:8.6px;letter-spacing:.3px;-webkit-text-stroke:.35px #111;">Уклоноуказатель</div>
<svg class="a" style="left:67.5px;top:198px" width="12" height="12" viewBox="0 0 12 12"><rect x="1" y="1" width="10" height="10" fill="#fafafa" stroke="#333" stroke-width="1.2"/><path d="M3 8L6 5L9 8" stroke="#333" fill="none"/><path d="M2 3H10" stroke="#c04050" stroke-width=".8"/><rect x="5" y="8" width="5" height="3" fill="#333"/></svg>
<div class="t r" style="left:83px;top:199.9px;">Задать из чертежа</div>
<svg class="a" style="left:67.5px;top:210px" width="12" height="12" viewBox="0 0 12 12"><path d="M1 3L1 11M11 3V11M1 3L6 8L11 3" stroke="#333" stroke-width="1.2" fill="none"/><path d="M4 1V2M7 1V2M10 1V2" stroke="#c04050"/><rect x="3" y="8" width="6" height="3" fill="#333"/></svg>
<div class="t r" style="left:83px;top:211.5px;">Задать по полилиниям</div>
<svg class="a" style="left:67.5px;top:221px" width="12" height="12" viewBox="0 0 12 12"><circle cx="2" cy="3" r="1" fill="#222"/><circle cx="10" cy="3" r="1" fill="#222"/><circle cx="6" cy="6" r="1" fill="#222"/><circle cx="2" cy="9" r="1" fill="#222"/><circle cx="10" cy="9" r="1" fill="#222"/></svg>
<div class="t r" style="left:83px;top:223.1px;">Задать по регулярной сетке</div>
<svg class="a" style="left:67.5px;top:233px" width="12" height="12" viewBox="0 0 12 12"><path d="M1 11L11 2" stroke="#333" stroke-width="1.1"/><circle cx="2" cy="10" r="1.3" fill="#333"/><circle cx="6" cy="6.5" r="1.1" fill="#333"/><circle cx="10" cy="3" r="1.1" fill="#333"/></svg>
<div class="t r" style="left:83px;top:234.7px;">Задать по геоточкам</div>
<svg class="a" style="left:67.5px;top:244px" width="12" height="12" viewBox="0 0 12 12"><rect x="4" y="1" width="7" height="10" fill="#666"/><rect x="1" y="5" width="6" height="6" fill="#555" stroke="#222"/><path d="M2 8H6M5 3H10" stroke="#ccc" stroke-width=".8"/></svg>
<div class="t r" style="left:83px;top:246.3px;">ID опорной точки</div>
<svg class="a" style="left:67.5px;top:256px" width="12" height="12" viewBox="0 0 12 12"><rect x="1" y="5" width="8" height="6" fill="#e0d040" stroke="#222"/><path d="M3 8H7" stroke="#222"/><rect x="6" y="1" width="5" height="5" fill="#fff" stroke="#2a3a70"/></svg>
<div class="t r" style="left:83px;top:257.9px;">Вставить в чертеж</div>
<svg class="a" style="left:67.5px;top:268px" width="12" height="12" viewBox="0 0 12 12"><rect x=".5" y=".5" width="11" height="11" fill="#1a8a8a" stroke="#0a4a4a"/><path d="M2 4H5M6 3H10M3 7L9 5" stroke="#9ff" stroke-width="1"/><path d="M3 9H9" stroke="#5cc" stroke-width="1"/></svg>
<div class="t r" style="left:83px;top:269.5px;">Отображение точек</div>
<svg class="a" style="left:67.5px;top:279px" width="12" height="12" viewBox="0 0 12 12"><rect x=".5" y=".5" width="11" height="11" fill="#1a8a8a" stroke="#0a4a4a"/><path d="M2 4H5M6 3H10M3 7L9 5" stroke="#9ff" stroke-width="1"/><path d="M3 9H9" stroke="#5cc" stroke-width="1"/></svg>
<div class="t r" style="left:83px;top:281.1px;">Отображение уклоноуказателей</div>
<svg class="a" style="left:67.5px;top:291px" width="12" height="12" viewBox="0 0 12 12"><path d="M1 8L4 7V9Z" fill="#222"/><rect x="5" y="6" width="6" height="5" fill="#eee" stroke="#c04050" stroke-width=".8"/><path d="M6 9H10" stroke="#333"/><path d="M7 5L11 1" stroke="#333" stroke-width="1.3"/></svg>
<div class="t r" style="left:83px;top:292.7px;">Быстрое редактирование</div>
<svg class="a" style="left:67.5px;top:302px" width="12" height="12" viewBox="0 0 12 12"><rect x="1" y="2" width="10" height="9" fill="#fff" stroke="#c06070" stroke-width="1"/><path d="M3 6L6 9L9 3" stroke="#333" stroke-width="1.2" fill="none"/><path d="M2 4H5" stroke="#333"/></svg>
<div class="t r" style="left:83px;top:304.3px;">Редактировать множество</div>
<svg class="a" style="left:67.5px;top:314px" width="12" height="12" viewBox="0 0 12 12"><rect x="1" y="1" width="5" height="10" fill="#fff" stroke="#222" stroke-width="1.4"/><path d="M1 6H6" stroke="#222"/><path d="M8 2V5M8 7V10M10 2V5M10 7V10" stroke="#222" stroke-width=".9"/></svg>
<div class="t r" style="left:83px;top:315.9px;">Отметки по поверхностям</div>
<svg class="a" style="left:67.5px;top:326px" width="12" height="12" viewBox="0 0 12 12"><path d="M1 8L4 7V9Z" fill="#222"/><rect x="5" y="6" width="6" height="5" fill="#eee" stroke="#c04050" stroke-width=".8"/><path d="M6 9H10" stroke="#333"/><path d="M7 5L11 1" stroke="#333" stroke-width="1.3"/></svg>
<div class="t r" style="left:83px;top:327.5px;">Обновить опорные точки</div>
<svg class="a" style="left:67.5px;top:337px" width="12" height="12" viewBox="0 0 12 12"><rect x="1" y="3" width="9" height="8" fill="#ddd" stroke="#222" stroke-width="1.1"/><path d="M2 6H9M2 8H9" stroke="#333"/><path d="M8 3L11 0" stroke="#334" stroke-width="1.4"/></svg>
<div class="t r" style="left:83px;top:339.1px;">Быстрое удаление</div>
<svg class="a" style="left:67.5px;top:349px" width="12" height="12" viewBox="0 0 12 12"><rect x="1" y="2" width="10" height="9" fill="#c8b020" stroke="#222"/><circle cx="4" cy="5" r="1" fill="#222"/><circle cx="8" cy="8" r="1" fill="#222"/><path d="M8 3L11 0" stroke="#334" stroke-width="1.4"/></svg>
<div class="t r" style="left:83px;top:350.7px;">Удалить опорные точки</div>
<svg class="a" style="left:67.5px;top:360px" width="12" height="12" viewBox="0 0 12 12"><rect x="1" y="2" width="10" height="9" fill="#2a9090" stroke="#0a4a4a"/><path d="M3 6H8M3 8L8 5" stroke="#8ff"/><path d="M8 3L11 0" stroke="#334" stroke-width="1.4"/></svg>
<div class="t r" style="left:83px;top:362.3px;">Удалить дубликаты</div>
<svg class="a" style="left:40.5px;top:374px" width="9" height="9" viewBox="0 0 9 9"><rect x="1" y="1" width="7" height="7" rx="1" fill="#f4f4f4" stroke="#9a9a9a" stroke-width="1"/><path d="M2.5 4.5H6.5" stroke="#222" stroke-width="1.2"/><path d="M4.5 2.5V6.5" stroke="#222" stroke-width="1.2"/></svg>
<svg class="a" style="left:53px;top:372px" width="12" height="12" viewBox="0 0 12 12"><path d="M.5 2.5H4.5L5.5 3.5H11.5V10.5H.5Z" fill="#f4f4a0" stroke="#333" stroke-width="1"/><path d="M1 10.5H11.5V4" stroke="#222" stroke-width="1.2" fill="none"/></svg>
<div class="t r" style="left:68.5px;top:373.9px;">Опорные горизонтали</div>
<svg class="a" style="left:53px;top:384px" width="12" height="12" viewBox="0 0 12 12"><path d="M1 5L6 2L6 5L11 3V11H1Z" fill="#8a1020" stroke="#5a0010" stroke-width=".8"/></svg>
<div class="t r" style="left:68.5px;top:385.5px;">Построить красную поверхность</div>
<svg class="a" style="left:53px;top:395px" width="12" height="12" viewBox="0 0 12 12"><path d="M1 3H11M1 6H11M1 9H11" stroke="#901828" stroke-width="1.8"/><path d="M1 3C0 5 1 8 2 9M11 3C12 5 11 8 10 9" stroke="#333" fill="none"/></svg>
<div class="t r" style="left:68.5px;top:397.1px;">Вкл/Откл слой красной поверхности</div>
<svg class="a" style="left:53px;top:407px" width="12" height="12" viewBox="0 0 12 12"><path d="M1 5L6 2L6 5L11 3V11H1Z" fill="#8a1020" stroke="#5a0010" stroke-width=".8"/></svg>
<div class="t r" style="left:68.5px;top:408.7px;">Редактор красной поверхности</div>
<svg class="a" style="left:40.5px;top:420px" width="9" height="9" viewBox="0 0 9 9"><rect x="1" y="1" width="7" height="7" rx="1" fill="#f4f4f4" stroke="#9a9a9a" stroke-width="1"/><path d="M2.5 4.5H6.5" stroke="#222" stroke-width="1.2"/><path d="M4.5 2.5V6.5" stroke="#222" stroke-width="1.2"/></svg>
<svg class="a" style="left:53px;top:418px" width="12" height="12" viewBox="0 0 12 12"><path d="M.5 2.5H4.5L5.5 3.5H11.5V10.5H.5Z" fill="#f4f4a0" stroke="#333" stroke-width="1"/><path d="M1 10.5H11.5V4" stroke="#222" stroke-width="1.2" fill="none"/></svg>
<div class="t r" style="left:68.5px;top:420.3px;">Красные горизонтали</div>
<svg class="a" style="left:53px;top:430px" width="12" height="12" viewBox="0 0 12 12"><path d="M2 2L10 6M2 6L10 2M1 11L5 6L9 11M9 3L11 11" stroke="#333" stroke-width=".9" fill="none"/></svg>
<div class="t r" style="left:68.5px;top:431.9px;">Структурные линии по проездам</div>
<svg class="a" style="left:40.5px;top:443px" width="9" height="9" viewBox="0 0 9 9"><rect x="1" y="1" width="7" height="7" rx="1" fill="#f4f4f4" stroke="#9a9a9a" stroke-width="1"/><path d="M2.5 4.5H6.5" stroke="#222" stroke-width="1.2"/><path d="M4.5 2.5V6.5" stroke="#222" stroke-width="1.2"/></svg>
<svg class="a" style="left:53px;top:442px" width="12" height="12" viewBox="0 0 12 12"><path d="M.5 2.5H4.5L5.5 3.5H11.5V10.5H.5Z" fill="#f4f4a0" stroke="#333" stroke-width="1"/><path d="M1 10.5H11.5V4" stroke="#222" stroke-width="1.2" fill="none"/></svg>
<div class="t r" style="left:68.5px;top:443.5px;color:#8e5262;-webkit-text-stroke:.15px #8e5262;">Проектный откос с дугами</div>
<svg class="a" style="left:40.5px;top:455px" width="9" height="9" viewBox="0 0 9 9"><rect x="1" y="1" width="7" height="7" rx="1" fill="#f4f4f4" stroke="#9a9a9a" stroke-width="1"/><path d="M2.5 4.5H6.5" stroke="#222" stroke-width="1.2"/><path d="M4.5 2.5V6.5" stroke="#222" stroke-width="1.2"/></svg>
<svg class="a" style="left:53px;top:453px" width="12" height="12" viewBox="0 0 12 12"><path d="M.5 2.5H4.5L5.5 3.5H11.5V10.5H.5Z" fill="#f4f4a0" stroke="#333" stroke-width="1"/><path d="M1 10.5H11.5V4" stroke="#222" stroke-width="1.2" fill="none"/></svg>
<div class="t r" style="left:68.5px;top:455.1px;">Картограмма</div>
<svg class="a" style="left:53px;top:465px" width="12" height="12" viewBox="0 0 12 12"><path d="M1 2H11M1 2L3 1V3ZM11 2L9 1V3Z" stroke="#222" fill="#222"/><rect x="1" y="5" width="10" height="6" fill="#fff" stroke="#222" stroke-width="1.1"/><path d="M1 8H11" stroke="#222"/></svg>
<div class="t r" style="left:68.5px;top:466.7px;">Простановка размеров</div>
<svg class="a" style="left:53px;top:476px" width="12" height="12" viewBox="0 0 12 12"><rect x="1" y="7" width="4" height="4" fill="#fff" stroke="#222"/><path d="M4 7L9 3" stroke="#222" stroke-width="1.4"/><path d="M7 1L11 2L9 5Z" fill="#222"/></svg>
<div class="t r" style="left:68.5px;top:478.3px;">Простановка координат</div>
<svg class="a" style="left:53px;top:488px" width="12" height="12" viewBox="0 0 12 12"><path d="M1.5 .5H7L10.5 4V11.5H1.5Z" fill="#fff" stroke="#222"/><path d="M7 .5V4H10.5" fill="none" stroke="#222"/><rect x="4" y="7" width="6" height="4" fill="#333"/></svg>
<div class="t r" style="left:68.5px;top:489.9px;">Оформление Вертикальной планировки</div>
<svg class="a" style="left:26px;top:501px" width="9" height="9" viewBox="0 0 9 9"><rect x="1" y="1" width="7" height="7" rx="1" fill="#f4f4f4" stroke="#9a9a9a" stroke-width="1"/><path d="M2.5 4.5H6.5" stroke="#222" stroke-width="1.2"/><path d="M4.5 2.5V6.5" stroke="#222" stroke-width="1.2"/></svg>
<svg class="a" style="left:38px;top:500px" width="12" height="12" viewBox="0 0 12 12"><path d="M.5 2.5H4.5L5.5 3.5H11.5V10.5H.5Z" fill="#f4f4a0" stroke="#333" stroke-width="1"/><path d="M1 10.5H11.5V4" stroke="#222" stroke-width="1.2" fill="none"/></svg>
<div class="t r" style="left:54px;top:501.5px;">Благоустройство</div>
<div class="a" style="left:21px;top:605px;width:202px;height:12px;background:#f2f2f2"></div>
<div class="a" style="left:21px;top:605px;width:14px;height:12px;background:linear-gradient(#fdfdfd,#e2e2e2);border:1px solid #9a9a9a;border-radius:1px"></div>
<div class="a" style="left:35px;top:605px;width:166px;height:12px;background:linear-gradient(#fafafa,#dcdcdc);border:1px solid #a6a6a6;border-radius:2px"></div>
<div class="a" style="left:208px;top:605px;width:14px;height:12px;background:linear-gradient(#fdfdfd,#e2e2e2);border:1px solid #9a9a9a;border-radius:1px"></div>
<svg class="a" style="left:24px;top:607px" width="8" height="9" viewBox="0 0 8 9"><path d="M5.5 1.5L2.5 4.5L5.5 7.5" stroke="#222" stroke-width="1.6" fill="none"/></svg>
<svg class="a" style="left:212px;top:607px" width="8" height="9" viewBox="0 0 8 9"><path d="M2.5 1.5L5.5 4.5L2.5 7.5" stroke="#222" stroke-width="1.6" fill="none"/></svg>
<svg class="a" style="left:114px;top:608px" width="7" height="7" viewBox="0 0 7 7"><path d="M1.5 1V6M3.5 1V6M5.5 1V6" stroke="#666"/></svg>
<div class="a" style="left:238px;top:76px;width:702px;height:14px;background:linear-gradient(#c2d8f5,#dbe8f8)"></div>
<svg class="a" style="left:245px;top:77.5px" width="71" height="14" viewBox="0 0 71 14"><defs><linearGradient id="tg" x1="0" y1="0" x2="0" y2="1"><stop offset="0" stop-color="#fff"/><stop offset="1" stop-color="#f2f5f9"/></linearGradient></defs><path d="M1 14C4 12 6 3 9 1.5C10 1 11 .5 13 .5H70V14Z" fill="url(#tg)" stroke="#d8e2ee" stroke-width=".8"/></svg>
<div class="t" style="left:259.5px;top:81px;font-size:8.4px;font-weight:bold;color:#2a2f38">Untitled0*</div>
<svg class="a" style="left:305px;top:80.5px" width="8" height="8" viewBox="0 0 8 8"><path d="M1 1L6.5 6.5M6.5 1L1 6.5" stroke="#333" stroke-width="1.1"/></svg>
<svg class="a" style="left:927px;top:79px" width="9" height="6" viewBox="0 0 9 6"><path d="M1 1H8L4.5 5Z" fill="#4a5a70"/></svg>
<div class="a" style="left:240px;top:90px;width:700px;height:529px;background:#f1f3f6;border-bottom:1px solid #dfe5ee"></div>
<div class="a" style="left:243px;top:91px;width:694px;height:2px;background:#6f6f6f"></div>
<div class="a" style="left:243px;top:91px;width:2px;height:525px;background:#6f6f6f"></div>
<div class="a" style="left:245px;top:93px;width:679px;height:507px;background:#969696"></div>
<div class="a" style="left:245px;top:93px;width:679px;height:1.5px;background:#a9a9a9"></div>
<div class="a" style="left:245px;top:93px;width:1.5px;height:507px;background:#a9a9a9"></div>
<div class="a" style="left:247px;top:95px;width:9px;height:505px;background:#9b9b9b"></div>
<div class="a" style="left:247px;top:95px;width:213px;height:9px;background:rgba(165,165,165,.18)"></div>
<div class="a" style="left:924px;top:93px;width:13px;height:507px;background:linear-gradient(90deg,#f0f0f0,#fafafa)"></div>
<div class="a" style="left:925px;top:93px;width:11px;height:11px;background:linear-gradient(#fdfdfd,#e4e4e4);border:1px solid #a0a0a0;border-radius:1px"></div>
<svg class="a" style="left:926.5px;top:95px" width="9" height="8" viewBox="0 0 9 8"><path d="M1.5 5.5L4.5 2.5L7.5 5.5" stroke="#222" stroke-width="1.6" fill="none"/></svg>
<div class="a" style="left:924px;top:248px;width:13px;height:231px;background:linear-gradient(90deg,#f4f4f4,#dadada);border:1px solid #b4b4b4;border-left:1px solid #8a8a8a;border-radius:1px"></div>
<svg class="a" style="left:927px;top:361px" width="8" height="6" viewBox="0 0 8 6"><path d="M1 1H7M1 3H7M1 5H7" stroke="#777"/></svg>
<div class="a" style="left:925px;top:589px;width:11px;height:11px;background:linear-gradient(#fdfdfd,#e4e4e4);border:1px solid #a0a0a0;border-radius:1px"></div>
<svg class="a" style="left:926.5px;top:591px" width="9" height="8" viewBox="0 0 9 8"><path d="M1.5 2.5L4.5 5.5L7.5 2.5" stroke="#222" stroke-width="1.6" fill="none"/></svg>
<div class="a" style="left:245px;top:600px;width:692px;height:16px;background:#eceef0"></div>
<div class="a" style="left:245px;top:601.5px;width:28px;height:1.0px;background:#666"></div>
<div class="a" style="left:247px;top:603px;width:11px;height:11px;background:linear-gradient(#fdfdfd,#e0e0e0);border:1px solid #9a9a9a"></div>
<div class="a" style="left:261px;top:603px;width:11px;height:11px;background:linear-gradient(#fdfdfd,#e0e0e0);border:1px solid #9a9a9a"></div>
<svg class="a" style="left:249px;top:605px" width="7" height="8" viewBox="0 0 7 8"><path d="M5 1L2 4L5 7" stroke="#222" stroke-width="1.6" fill="none"/></svg>
<svg class="a" style="left:263px;top:605px" width="7" height="8" viewBox="0 0 7 8"><path d="M2 1L5 4L2 7" stroke="#222" stroke-width="1.6" fill="none"/></svg>
<svg class="a" style="left:272px;top:600px" width="130" height="16" viewBox="0 0 130 16"><path d="M.5 .5L5 14.5H38.5L44 .5" fill="#ffffff" stroke="#555" stroke-width="1"/><path d="M40 .5L46 14.5H79L85 .5" fill="#e4e4e4" stroke="#666" stroke-width="1"/><path d="M83 .5L89 14.5H118L124 .5" fill="#e4e4e4" stroke="#666" stroke-width="1"/><path d="M0 .5H130" stroke="#555"/></svg>
<div class="t" style="left:279px;top:604px;font-size:8.5px;font-weight:bold;color:#222">Model</div>
<div class="t" style="left:315.5px;top:605px;font-size:7.6px;font-weight:bold;color:#333">Layout1</div>
<div class="t" style="left:358px;top:605px;font-size:7.6px;font-weight:bold;color:#333">Layout2</div>
<div class="a" style="left:574px;top:601px;width:2px;height:15px;background:#555;border-right:1px solid #aaa"></div>
<div class="a" style="left:577px;top:603px;width:13px;height:11px;background:linear-gradient(#fdfdfd,#e0e0e0);border:1px solid #9a9a9a"></div>
<svg class="a" style="left:580px;top:605px" width="7" height="8" viewBox="0 0 7 8"><path d="M5 1L2 4L5 7" stroke="#222" stroke-width="1.6" fill="none"/></svg>
<div class="a" style="left:590px;top:602px;width:320px;height:14px;background:linear-gradient(#fdfdfd,#f4f4f4)"></div>
<div class="a" style="left:698px;top:603px;width:185px;height:12px;background:linear-gradient(#fafafa,#dcdcdc);border:1px solid #a6a6a6;border-radius:2px"></div>
<svg class="a" style="left:786px;top:606px" width="7" height="7" viewBox="0 0 7 7"><path d="M1.5 1V6M3.5 1V6M5.5 1V6" stroke="#666"/></svg>
<div class="a" style="left:910px;top:603px;width:13px;height:11px;background:linear-gradient(#fdfdfd,#e0e0e0);border:1px solid #9a9a9a"></div>
<svg class="a" style="left:913px;top:605px" width="7" height="8" viewBox="0 0 7 8"><path d="M2 1L5 4L2 7" stroke="#222" stroke-width="1.6" fill="none"/></svg>
<svg class="a" style="left:929px;top:607px" width="9" height="9" viewBox="0 0 9 9"><path d="M8 1L1 8M8 4L4 8M8 7L7 8" stroke="#777"/></svg>
<div class="a" style="left:565.5px;top:137.5px;width:51.89999999999998px;height:30.5px;background:rgba(180,180,180,.2)"></div>
<div class="a" style="left:574px;top:142.0px;width:39.39999999999998px;height:10.0px;background:rgba(222,205,212,.42)"></div>
<div class="a" style="left:569px;top:146.5px;width:4.5px;height:1.1999999999999886px;background:#444"></div>
<div class="t lbl red" style="left:575px;top:140.3px">240.89</div>
<div class="t lbl blk" style="left:568.5px;top:153.8px">165.60</div>
<svg class="a" style="left:561.5px;top:150.5px" width="5" height="5" viewBox="0 0 5 5"><circle cx="2.5" cy="2.5" r="2.1" fill="#111"/></svg>
<div class="a" style="left:671.5px;top:115px;width:51.39999999999998px;height:30.5px;background:rgba(180,180,180,.2)"></div>
<div class="a" style="left:679.5px;top:119.5px;width:39.39999999999998px;height:10.0px;background:rgba(222,205,212,.42)"></div>
<div class="a" style="left:674.5px;top:124px;width:4.5px;height:1.2000000000000028px;background:#444"></div>
<div class="t lbl red" style="left:680.5px;top:117.8px">464.01</div>
<div class="t lbl blk" style="left:674.5px;top:131.3px">164.76</div>
<svg class="a" style="left:667.5px;top:127.5px" width="5" height="5" viewBox="0 0 5 5"><circle cx="2.5" cy="2.5" r="2.1" fill="#111"/></svg>
<div class="a" style="left:692px;top:218px;width:45.200000000000045px;height:30.5px;background:rgba(180,180,180,.2)"></div>
<div class="a" style="left:695px;top:222.5px;width:32.0px;height:10.0px;background:rgba(222,205,212,.42)"></div>
<div class="t lbl red" style="left:695px;top:220.8px">64.67</div>
<div class="t lbl blk" style="left:695px;top:234.3px">157.49</div>
<svg class="a" style="left:688.0px;top:231.0px" width="5" height="5" viewBox="0 0 5 5"><circle cx="2.5" cy="2.5" r="2.1" fill="#111"/></svg>
<div class="a" style="left:606.5px;top:343.5px;width:45.200000000000045px;height:31.0px;background:rgba(180,180,180,.2)"></div>
<div class="a" style="left:609.5px;top:348.0px;width:25.799999999999955px;height:10.0px;background:rgba(222,205,212,.42)"></div>
<div class="t lbl red" style="left:609.5px;top:346.3px">9.42</div>
<div class="t lbl blk" style="left:609.5px;top:360.3px">148.63</div>
<svg class="a" style="left:602.0px;top:357.5px" width="5" height="5" viewBox="0 0 5 5"><circle cx="2.5" cy="2.5" r="2.1" fill="#111"/></svg>
<div class="a" style="left:394.5px;top:390px;width:45.19999999999999px;height:30px;background:rgba(180,180,180,.2)"></div>
<div class="a" style="left:399px;top:394.5px;width:32.0px;height:10.0px;background:rgba(222,205,212,.42)"></div>
<div class="t lbl red" style="left:399px;top:392.8px">37.19</div>
<div class="t lbl blk" style="left:397.5px;top:405.8px">142.55</div>
<svg class="a" style="left:390.5px;top:403.0px" width="5" height="5" viewBox="0 0 5 5"><circle cx="2.5" cy="2.5" r="2.1" fill="#111"/></svg>
<div class="a" style="left:521.5px;top:470px;width:45.200000000000045px;height:30px;background:rgba(180,180,180,.2)"></div>
<div class="a" style="left:524.5px;top:474.5px;width:32.0px;height:10.0px;background:rgba(222,205,212,.42)"></div>
<div class="t lbl red" style="left:524.5px;top:472.8px">28.84</div>
<div class="t lbl blk" style="left:524.5px;top:485.8px">140.02</div>
<svg class="a" style="left:516.5px;top:483.5px" width="5" height="5" viewBox="0 0 5 5"><circle cx="2.5" cy="2.5" r="2.1" fill="#111"/></svg>
<div class="a" style="left:626.5px;top:446.5px;width:45.200000000000045px;height:30.5px;background:rgba(180,180,180,.2)"></div>
<div class="a" style="left:629.5px;top:451.0px;width:32.0px;height:10.0px;background:rgba(222,205,212,.42)"></div>
<div class="t lbl red" style="left:629.5px;top:449.3px">19.67</div>
<div class="t lbl blk" style="left:629.5px;top:462.8px">142.18</div>
<svg class="a" style="left:622.0px;top:460.0px" width="5" height="5" viewBox="0 0 5 5"><circle cx="2.5" cy="2.5" r="2.1" fill="#111"/></svg>
<div class="a" style="left:414.5px;top:493.5px;width:45.19999999999999px;height:30.0px;background:rgba(180,180,180,.2)"></div>
<div class="a" style="left:419px;top:498.0px;width:32.0px;height:10.0px;background:rgba(222,205,212,.42)"></div>
<div class="t lbl red" style="left:419px;top:496.3px">45.10</div>
<div class="t lbl blk" style="left:417.5px;top:509.3px">135.76</div>
<svg class="a" style="left:411.0px;top:506.0px" width="5" height="5" viewBox="0 0 5 5"><circle cx="2.5" cy="2.5" r="2.1" fill="#111"/></svg>
<div class="a" style="left:646.5px;top:550px;width:45.200000000000045px;height:30px;background:rgba(180,180,180,.2)"></div>
<div class="a" style="left:650.5px;top:554.5px;width:32.0px;height:10.0px;background:rgba(222,205,212,.42)"></div>
<div class="t lbl red" style="left:650.5px;top:552.8px">35.96</div>
<div class="t lbl blk" style="left:649.5px;top:565.8px">136.63</div>
<svg class="a" style="left:643.5px;top:563.5px" width="5" height="5" viewBox="0 0 5 5"><circle cx="2.5" cy="2.5" r="2.1" fill="#111"/></svg>
<svg class="a" style="left:352px;top:410.5px" width="8" height="8" viewBox="0 0 8 8"><rect x="1" y="1" width="5.5" height="5.5" fill="none" stroke="#222" stroke-width="1.2"/></svg>
<svg class="a" style="left:435px;top:425px" width="50" height="40" viewBox="0 0 50 40"><path d="M7.5 12L44 35.3" stroke="#1a1a1a" stroke-width="1.7"/><path d="M44.5 35.6L35 33L37.5 29Z" fill="#111"/></svg>
<div class="t" style="left:462px;top:438.5px;font-size:10.5px;color:#2a2a2a;letter-spacing:.3px;transform:translate(-50%,-50%) rotate(32deg)">147</div>
<div class="t" style="left:452.5px;top:453.5px;font-size:10.5px;color:#2a2a2a;letter-spacing:.3px;transform:translate(-50%,-50%) rotate(32deg)">56.65</div>
<svg class="a" style="left:262px;top:476px" width="112" height="106" viewBox="0 0 112 106"><path d="M8.5 4.5L13.5 9.5M18.5 4.5L13.5 9.5V13" stroke="#333" stroke-width="1.1" fill="none"/>
<path d="M13.5 22.5L8.5 40.5H18.5Z" fill="none" stroke="#333" stroke-width="1.2"/>
<path d="M13.5 40.5V86.5" stroke="#333" stroke-width="1.2"/>
<rect x="5.5" y="86.5" width="16" height="15.5" fill="none" stroke="#333" stroke-width="1.3"/>
<path d="M21.5 94.5H69" stroke="#333" stroke-width="1.1"/>
<path d="M89.5 94.5L69 89.5V100Z" fill="none" stroke="#333" stroke-width="1.2"/>
<path d="M99 90L107 99M107 90L99 99" stroke="#333" stroke-width="1.1"/></svg>
<div class="a" style="left:20px;top:622px;width:920px;height:14px;background:linear-gradient(#c6daf3,#cad9ec 40%,#c3d3e7)"></div>
<div class="t" style="left:23px;top:625.5px;font-size:8.7px;color:#2e4a6c;-webkit-text-stroke:.2px #2e4a6c">Command line</div>
<svg class="a" style="left:917px;top:625.5px" width="8" height="8" viewBox="0 0 8 8"><rect x="2" y="1" width="3.5" height="4" fill="none" stroke="#444b58" stroke-width="1.1"/><path d="M1 5.5H6.5M3.75 5.5V7.5" stroke="#444b58" stroke-width="1"/></svg>
<svg class="a" style="left:929px;top:625.5px" width="8" height="8" viewBox="0 0 8 8"><path d="M1 1L7 7M7 1L1 7" stroke="#444b58" stroke-width="1.1"/></svg>
<div class="a" style="left:20px;top:636px;width:920px;height:66px;background:#fff"></div>
<div class="a" style="left:20px;top:636px;width:920px;height:2px;background:#777"></div>
<div class="a" style="left:20px;top:636px;width:1px;height:66px;background:#888"></div>
<div class="a" style="left:20px;top:690px;width:920px;height:1px;background:#6a6a6a"></div>
<div class="t ml" style="top:639.5px">Invalid Keyword or Command. Enter (') for command or (?) for math expression: ЂGcSfRedPntQuickErase</div>
<div class="t ml" style="top:648.9px">Command: GcSfRedPntQuickErase</div>
<div class="t ml" style="top:658.3px">GcSfRedPntQuickErase - Быстрое удаление</div>
<div class="t ml" style="top:667.7px">Быстрое удаление опорных точек.</div>
<div class="t ml" style="top:692px">Укажите опорную точку:</div>
<div class="a" style="left:927px;top:638px;width:12px;height:52px;background:#f4f4f4"></div>
<div class="a" style="left:927px;top:638px;width:12px;height:12px;background:linear-gradient(#fdfdfd,#e2e2e2);border:1px solid #9a9a9a"></div>
<svg class="a" style="left:928.5px;top:640.5px" width="9" height="8" viewBox="0 0 9 8"><path d="M1.5 5.5L4.5 2.5L7.5 5.5" stroke="#222" stroke-width="1.6" fill="none"/></svg>
<div class="a" style="left:927px;top:671px;width:12px;height:6px;background:linear-gradient(#fafafa,#dadada);border:1px solid #a6a6a6"></div>
<div class="a" style="left:927px;top:677px;width:12px;height:12px;background:linear-gradient(#fdfdfd,#e2e2e2);border:1px solid #9a9a9a"></div>
<svg class="a" style="left:928.5px;top:679.5px" width="9" height="8" viewBox="0 0 9 8"><path d="M1.5 2.5L4.5 5.5L7.5 2.5" stroke="#222" stroke-width="1.6" fill="none"/></svg>
<div class="a" style="left:0px;top:702px;width:960px;height:18px;background:linear-gradient(#d6e5f8,#c0d6f2)"></div>
<div class="t" style="left:2px;top:708.5px;font-size:8px;color:#26364c">359.34,304.96,0</div>
<div class="sb" style="left:161px;width:27px">SNAP</div>
<div class="sb" style="left:189px;width:26px">GRID</div>
<div class="sb o" style="left:215.5px;width:35px">OSNAP</div>
<div class="sb o" style="left:250.5px;width:38px">OTRACK</div>
<div class="sb o" style="left:288.5px;width:32.5px">POLAR</div>
<div class="sb" style="left:321px;width:36px">ORTHO</div>
<div class="sb" style="left:357.5px;width:19.5px">SW</div>
<div class="sb o" style="left:377.5px;width:17.5px">SH</div>
<div class="a" style="left:795px;top:704px;width:1px;height:16px;background:#a0b0c4"></div>
<div class="a" style="left:799.5px;top:705px;width:15.0px;height:14px;background:#5a88b8;border:1px solid #8a5a3a"></div>
<svg class="a" style="left:800.0px;top:705.5px" width="14" height="14" viewBox="0 0 14 14"><rect x="1" y="1" width="12" height="12" fill="#3a7ab0"/><path d="M3 12C3 6 6 3 12 3" stroke="#cfe8ff" stroke-width="1.5" fill="none"/></svg>
<div class="a" style="left:818.5px;top:705px;width:15.0px;height:14px;background:#dce6f2;border:1px solid #7d8ea6"></div>
<svg class="a" style="left:819.0px;top:705.5px" width="14" height="14" viewBox="0 0 14 14"><rect x="1" y="1" width="12" height="12" fill="#7890a8"/><path d="M2 11L11 4M3 8H8" stroke="#222" stroke-width="1.2"/></svg>
<div class="sb" style="left:835px;width:53px;top:705px;font-size:8.6px;font-weight:bold;line-height:13px">M1:1</div>
<div class="a" style="left:890px;top:705px;width:15px;height:14px;background:linear-gradient(#fbfcfe,#e2eaf4);border:1px solid #7d8ea6"></div>
<svg class="a" style="left:891px;top:706px" width="13" height="13" viewBox="0 0 13 13"><rect x="1" y="1" width="11" height="11" fill="#c8d0da"/><path d="M3 3L10 10M5 2L11 8" stroke="#6a3a3a" stroke-width="2"/></svg>
<div class="a" style="left:907px;top:705px;width:15px;height:14px;background:linear-gradient(#fbfcfe,#e2eaf4);border:1px solid #7d8ea6"></div>
<svg class="a" style="left:908px;top:706px" width="13" height="13" viewBox="0 0 13 13"><circle cx="6.5" cy="6.5" r="4.5" fill="#eef" stroke="#333" stroke-width="1.4"/><path d="M10 10L12 12" stroke="#333" stroke-width="1.5"/></svg>
<div class="a" style="left:925px;top:705px;width:15px;height:14px;background:linear-gradient(#fbfcfe,#e2eaf4);border:1px solid #7d8ea6"></div>
<svg class="a" style="left:926px;top:706px" width="13" height="13" viewBox="0 0 13 13"><path d="M3 6A4 4 0 0 1 10 4M10 7A4 4 0 0 1 3 9" stroke="#3a9a40" stroke-width="1.5" fill="none"/></svg>
<div class="a" style="left:943px;top:705px;width:15px;height:14px;background:linear-gradient(#fbfcfe,#e2eaf4);border:1px solid #7d8ea6"></div>
<svg class="a" style="left:944px;top:706px" width="13" height="13" viewBox="0 0 13 13"><rect x="1" y="2" width="11" height="9" fill="#3a6aa0" stroke="#223"/><rect x="3" y="4" width="7" height="5" fill="#6ac"/></svg>
</body></html>
